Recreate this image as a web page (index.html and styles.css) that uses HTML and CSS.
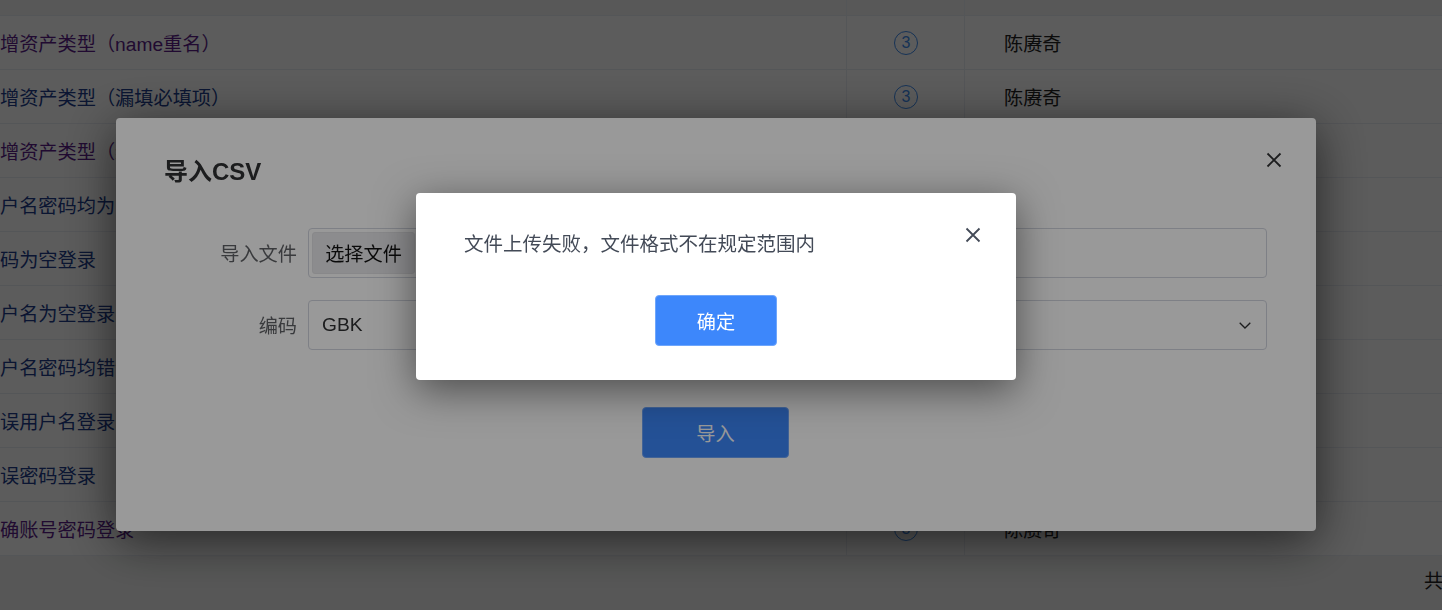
FILE: index.html
```html
<!DOCTYPE html>
<html lang="zh-CN">
<head>
<meta charset="utf-8">
<title>导入CSV</title>
<link rel="stylesheet" href="styles.css">
</head>
<body>
<div class="page">
  <div class="table">
    <div class="thead-stub">
      <div class="cell c-name"></div><div class="cell c-num"></div><div class="cell c-owner"></div>
    </div>
    <div class="row"><div class="cell c-name visited">新增资产类型（name重名）</div><div class="cell c-num"><span class="circ">3</span></div><div class="cell c-owner">陈赓奇</div></div>
    <div class="row"><div class="cell c-name link">新增资产类型（漏填必填项）</div><div class="cell c-num"><span class="circ">3</span></div><div class="cell c-owner">陈赓奇</div></div>
    <div class="row"><div class="cell c-name visited">新增资产类型（组件类型）</div><div class="cell c-num"><span class="circ">3</span></div><div class="cell c-owner">陈赓奇</div></div>
    <div class="row"><div class="cell c-name link">用户名密码均为空登录</div><div class="cell c-num"><span class="circ">3</span></div><div class="cell c-owner">陈赓奇</div></div>
    <div class="row"><div class="cell c-name link">密码为空登录</div><div class="cell c-num"><span class="circ">3</span></div><div class="cell c-owner">陈赓奇</div></div>
    <div class="row"><div class="cell c-name link">用户名为空登录</div><div class="cell c-num"><span class="circ">3</span></div><div class="cell c-owner">陈赓奇</div></div>
    <div class="row"><div class="cell c-name link">用户名密码均错误登录</div><div class="cell c-num"><span class="circ">3</span></div><div class="cell c-owner">陈赓奇</div></div>
    <div class="row"><div class="cell c-name link">错误用户名登录</div><div class="cell c-num"><span class="circ">3</span></div><div class="cell c-owner">陈赓奇</div></div>
    <div class="row"><div class="cell c-name link">错误密码登录</div><div class="cell c-num"><span class="circ">3</span></div><div class="cell c-owner">陈赓奇</div></div>
    <div class="row"><div class="cell c-name visited">正确账号密码登录</div><div class="cell c-num"><span class="circ">3</span></div><div class="cell c-owner">陈赓奇</div></div>
  </div>
  <div class="footer"><span class="total">共 10 条</span></div>
</div>

<div class="mask"></div>

<div class="dialog-import">
  <h2 class="dlg-title">导入CSV</h2>
  <svg class="dlg-close" viewBox="0 0 16 16" width="16" height="16"><path d="M1.5 1.5 L14.5 14.5 M14.5 1.5 L1.5 14.5" stroke="#303133" stroke-width="1.8" fill="none"/></svg>
  <div class="form">
    <div class="form-row">
      <label class="form-label">导入文件</label>
      <div class="field file-field">
        <button class="file-btn" type="button">选择文件</button>
      </div>
    </div>
    <div class="form-row">
      <label class="form-label">编码</label>
      <div class="field select-field">
        <span class="select-value">GBK</span>
        <svg class="chevron" viewBox="0 0 12 7" width="12" height="7"><path d="M0.7 0.7 L6 6 L11.3 0.7" stroke="#303133" stroke-width="1.3" fill="none"/></svg>
      </div>
    </div>
  </div>
  <div class="dlg-actions">
    <button class="btn-primary btn-import" type="button">导入</button>
  </div>
</div>

<div class="mask"></div>

<div class="msgbox">
  <p class="msg-text">文件上传失败，文件格式不在规定范围内</p>
  <svg class="msg-close" viewBox="0 0 16 16" width="16" height="16"><path d="M1.5 1.5 L14.5 14.5 M14.5 1.5 L1.5 14.5" stroke="#434a57" stroke-width="1.8" fill="none"/></svg>
  <div class="msg-actions">
    <button class="btn-primary btn-ok" type="button">确定</button>
  </div>
</div>
</body>
</html>
```

FILE: styles.css
```css
html, body {
  margin: 0;
  padding: 0;
}
body {
  width: 1442px;
  height: 610px;
  overflow: hidden;
  background: #ffffff;
  font-family: "Liberation Sans", "Noto Sans CJK SC", sans-serif;
  font-size: 19.2px;
  color: #303133;
}

.page {
  width: 1442px;
  height: 610px;
  display: flex;
  flex-direction: column;
  background: #f3f4f3;
}

.table {
  display: flex;
  flex-direction: column;
  background: #ffffff;
}
.thead-stub {
  display: flex;
  height: 15px;
  background: #f5f5f5;
  border-bottom: 1px solid #ebeef5;
}
.row {
  display: flex;
  height: 53px;
  border-bottom: 1px solid #ebeef5;
}
.cell {
  display: flex;
  align-items: center;
  box-sizing: border-box;
  white-space: nowrap;
  overflow: hidden;
}
.c-name {
  width: 847px;
  text-indent: -1em;
  border-right: 1px solid #ebeef5;
}
.c-num {
  width: 118px;
  justify-content: center;
  border-right: 1px solid #ebeef5;
}
.c-owner {
  flex: 1;
  padding-left: 39px;
  color: #222222;
}
.visited { color: #5c1f8a; }
.link { color: #203d8c; }

.circ {
  width: 24px;
  height: 24px;
  box-sizing: border-box;
  border: 1px solid #3f8ef0;
  border-radius: 50%;
  color: #3f8ef0;
  font-size: 16px;
  line-height: 22px;
  text-align: center;
  display: inline-block;
  text-indent: 0;
  margin-left: 1px;
}

.footer {
  flex: 1;
  display: flex;
  justify-content: flex-start;
  padding: 13px 0 0 1424px;
  line-height: 26px;
  white-space: nowrap;
  color: #222222;
}

.mask {
  position: fixed;
  left: 0;
  top: 0;
  width: 1442px;
  height: 610px;
  background: rgba(0, 0, 0, 0.4);
}

.dialog-import {
  position: fixed;
  left: 116px;
  top: 118px;
  width: 1200px;
  height: 413px;
  box-sizing: border-box;
  padding: 40px 49px 0 48px;
  background: #ffffff;
  border-radius: 4px;
  box-shadow: 0 10px 50px rgba(0, 0, 0, 0.6);
}
.dlg-title {
  margin: 0;
  font-size: 24px;
  font-weight: bold;
  line-height: 28px;
  color: #303133;
}
.dlg-close {
  position: absolute;
  right: 34px;
  top: 34px;
}
.form {
  margin-top: 42px;
  display: flex;
  flex-direction: column;
  gap: 22px;
}
.form-row {
  display: flex;
  align-items: center;
  height: 50px;
}
.form-label {
  width: 144px;
  box-sizing: border-box;
  padding-right: 11px;
  text-align: right;
  color: #606266;
}
.field {
  flex: 1;
  height: 50px;
  box-sizing: border-box;
  border: 1px solid #d2d5e0;
  border-radius: 4px;
  display: flex;
  align-items: center;
}
.file-field {
  padding: 3px;
}
.file-btn {
  height: 42px;
  width: 103px;
  box-sizing: border-box;
  border: 1px solid #e3e3e6;
  border-radius: 3px;
  background: #e9e9ed;
  font-family: inherit;
  font-size: 19.2px;
  color: #111111;
  padding: 0;
}
.select-field {
  padding: 0 15px 0 13px;
  justify-content: space-between;
}
.select-value {
  color: #303133;
}

.dlg-actions {
  margin-top: 57px;
  display: flex;
  justify-content: center;
}
.btn-primary {
  font-family: inherit;
  font-size: 19.2px;
  color: #ffffff;
  background: #3d87fb;
  border: 1px solid #6fa6fb;
  border-radius: 4px;
  padding: 0;
}
.btn-import {
  width: 147px;
  height: 51px;
}

.msgbox {
  position: fixed;
  left: 416px;
  top: 193px;
  width: 600px;
  height: 187px;
  box-sizing: border-box;
  padding: 38px 48px 0 48px;
  background: #ffffff;
  border-radius: 4px;
  box-shadow: 0 10px 40px rgba(0, 0, 0, 0.5);
}
.msg-text {
  margin: 0;
  font-size: 19.5px;
  line-height: 26px;
  color: #434a57;
}
.msg-close {
  position: absolute;
  right: 35px;
  top: 34px;
}
.msg-actions {
  margin-top: 38px;
  display: flex;
  justify-content: center;
}
.btn-ok {
  width: 122px;
  height: 51px;
}
```
